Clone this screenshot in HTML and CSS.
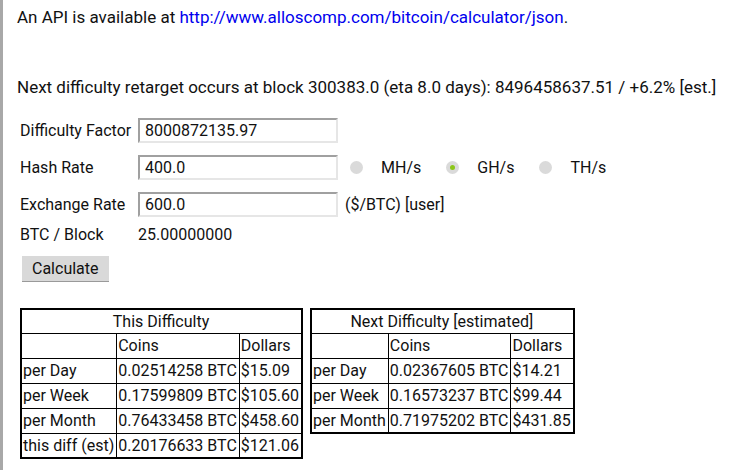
FILE: index.html
```html
<!DOCTYPE html>
<html lang="en">
<head>
  <meta charset="UTF-8" />
  <title>Bitcoin Mining Calculator</title>
  <link rel="stylesheet" href="styles.css">
</head>
<body>
  <div class="page">
    <p class="api">An API is available at <a href="#">http://www.alloscomp.com/bitcoin/calculator/json</a>.</p>

    <p class="retarget">Next difficulty retarget occurs at block 300383.0 (eta 8.0 days): 8496458637.51 / +6.2% [est.]</p>

    <form class="calc">
      <div class="row">
        <label class="lbl">Difficulty Factor</label>
        <input class="field" type="text" value="8000872135.97">
      </div>
      <div class="row">
        <label class="lbl">Hash Rate</label>
        <input class="field" type="text" value="400.0">
        <label class="unit"><input type="radio" name="rate"> MH/s</label>
        <label class="unit"><input type="radio" name="rate" checked> GH/s</label>
        <label class="unit"><input type="radio" name="rate"> TH/s</label>
      </div>
      <div class="row">
        <label class="lbl">Exchange Rate</label>
        <input class="field" type="text" value="600.0">
        <span class="note">($/BTC) [user]</span>
      </div>
      <div class="row plain">
        <span class="lbl">BTC / Block</span>
        <span>25.00000000</span>
      </div>
      <button type="button" class="btn">Calculate</button>
    </form>

    <div class="results">
      <table class="res">
        <tr><th colspan="3">This Difficulty</th></tr>
        <tr><td></td><td>Coins</td><td>Dollars</td></tr>
        <tr><td>per Day</td><td>0.02514258 BTC</td><td>$15.09</td></tr>
        <tr><td>per Week</td><td>0.17599809 BTC</td><td>$105.60</td></tr>
        <tr><td>per Month</td><td>0.76433458 BTC</td><td>$458.60</td></tr>
        <tr><td>this diff (est)</td><td>0.20176633 BTC</td><td>$121.06</td></tr>
      </table>
      <table class="res">
        <tr><th colspan="3">Next Difficulty [estimated]</th></tr>
        <tr><td></td><td>Coins</td><td>Dollars</td></tr>
        <tr><td>per Day</td><td>0.02367605 BTC</td><td>$14.21</td></tr>
        <tr><td>per Week</td><td>0.16573237 BTC</td><td>$99.44</td></tr>
        <tr><td>per Month</td><td>0.71975202 BTC</td><td>$431.85</td></tr>
      </table>
    </div>
  </div>
</body>
</html>
```

FILE: styles.css
```css
* {
  box-sizing: border-box;
}

html {
  background: #fff;
}

body {
  margin: 0;
  border-left: 3px solid #a8a8a8;
  min-height: 100vh;
  font-family: Roboto, 'Liberation Sans', sans-serif;
  font-size: 16px;
  color: #111;
}

.page {
  padding: 7px 14px;
}

p {
  margin: 0;
  font-size: 17px;
  line-height: 20px;
}

a {
  color: #0000ee;
  text-decoration: none;
}

.retarget {
  margin-top: 50px;
}

.calc {
  margin-top: 21px;
  padding-left: 3px;
}

.row {
  display: flex;
  align-items: center;
  height: 25px;
  margin-bottom: 12px;
}

.row.plain {
  height: 18px;
  margin-top: -4px;
  margin-bottom: 13px;
}

.lbl {
  width: 118px;
}

.field {
  width: 200px;
  height: 25px;
  padding: 0 5px;
  font: inherit;
  color: #111;
  border: 2px solid;
  border-color: #a0a0a0 #e6e6e6 #e6e6e6 #a0a0a0;
  background: #fff;
}

.note {
  margin-left: 7px;
}

.unit {
  display: flex;
  align-items: center;
  margin-left: 12px;
  margin-right: 13px;
}

.unit input {
  appearance: none;
  -webkit-appearance: none;
  width: 13px;
  height: 13px;
  margin: 0 18px 0 0;
  border-radius: 50%;
  background: #dadada;
  position: relative;
}

.unit input:checked::after {
  content: "";
  position: absolute;
  left: 4px;
  top: 4px;
  width: 5px;
  height: 5px;
  border-radius: 50%;
  background: #8cc61a;
}

.btn {
  font: inherit;
  color: #111;
  padding: 0 10px;
  height: 26px;
  margin-left: 2px;
  border: none;
  border-bottom: 1px solid #9a9a9a;
  background: #d9d9d9;
}

.results {
  display: flex;
  align-items: flex-start;
  gap: 7px;
  margin-top: 26px;
  padding-left: 3px;
}

.res {
  border-collapse: collapse;
  border: 2px solid #000;
}

.res th {
  font-weight: normal;
  border: 1px solid #000;
  height: 24px;
  padding: 0 2px 0 1px;
}

.res td {
  border: 1px solid #000;
  height: 25px;
  padding: 0 2px 0 1px;
  white-space: nowrap;
}
```
